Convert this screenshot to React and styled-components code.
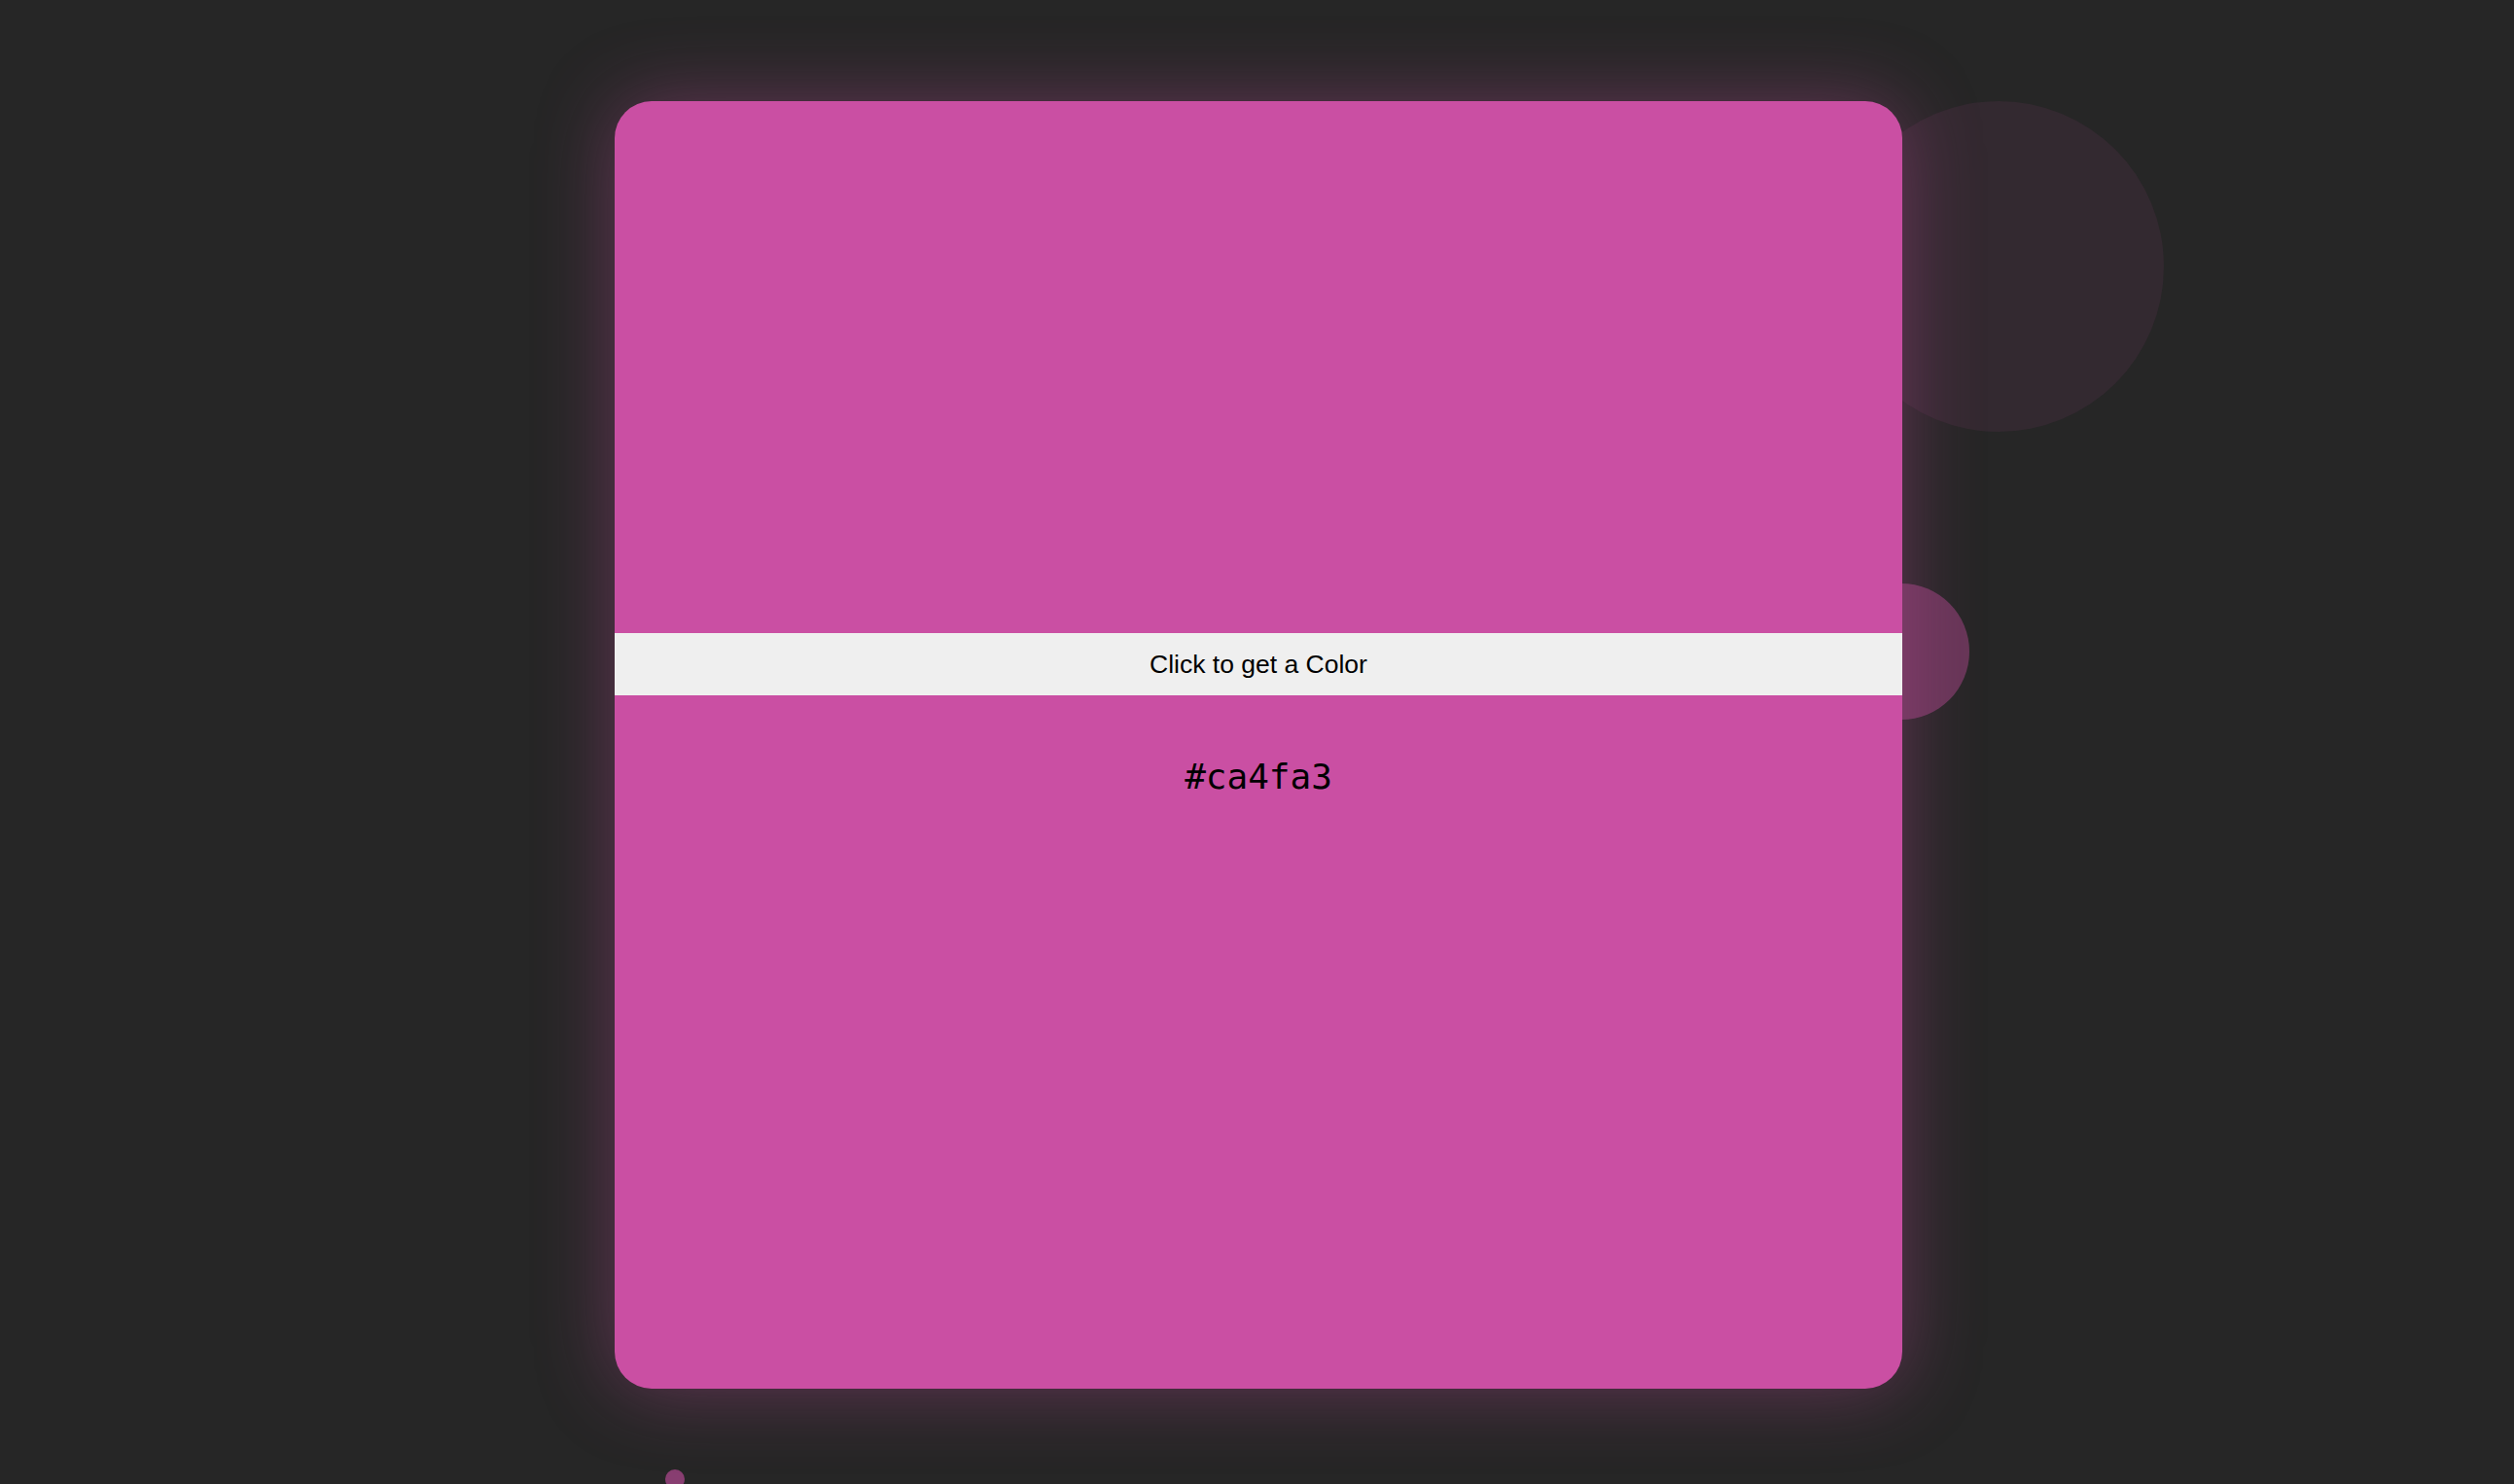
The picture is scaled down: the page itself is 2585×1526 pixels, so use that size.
import styled, { createGlobalStyle } from 'styled-components'

const GlobalStyle = createGlobalStyle`
  html, body {
    margin: 0;
    padding: 0;
    background: #262626;
    overflow: hidden;
  }
`

const Stage = styled.div`
  position: relative;
  width: 2585px;
  height: 1526px;
  background: #262626;
  overflow: hidden;
  display: flex;
  justify-content: center;
  padding: 104px 0 0 3px;
  box-sizing: border-box;
`

// 뒤에 떠다니는 동그라미들
const Bubble = styled.div`
  position: absolute;
  border-radius: 50%;
  background: ${(p) => p.$color};
  width: ${(p) => p.$size}px;
  height: ${(p) => p.$size}px;
  left: ${(p) => p.$x - p.$size / 2}px;
  top: ${(p) => p.$y - p.$size / 2}px;
  z-index: 0;
`

const Card = styled.div`
  position: relative;
  z-index: 1;
  width: 1324px;
  height: 1324px;
  border-radius: 38px;
  background: ${(p) => p.$color};
  box-shadow: 0 0 80px rgba(202, 79, 163, 0.38);
  display: flex;
  flex-direction: column;
  align-items: stretch;
  padding-top: 547px;
  box-sizing: border-box;
`

const ColorButton = styled.button`
  height: 64px;
  border: none;
  margin: 0;
  padding: 0;
  background: #efefef;
  color: #000;
  font-family: 'Liberation Sans', Arial, sans-serif;
  font-size: 26.5px;
  cursor: pointer;
`

const HexText = styled.p`
  margin: 62px 0 0;
  text-align: center;
  font-family: 'DejaVu Sans Mono', 'Liberation Mono', monospace;
  font-size: 36px;
  line-height: 1.2;
  color: #000;
`

function App() {
  const color = '#ca4fa3'
  return (
    <>
      <GlobalStyle />
      <Stage>
        <Bubble $x={2055} $y={274} $size={340} $color="rgba(202, 79, 163, 0.08)" />
        <Bubble $x={1955} $y={670} $size={140} $color="rgba(202, 79, 163, 0.4)" />
        <Bubble $x={694} $y={1521} $size={20} $color="rgba(202, 79, 163, 0.6)" />
        <Card $color={color}>
          <ColorButton>Click to get a Color</ColorButton>
          <HexText>{color}</HexText>
        </Card>
      </Stage>
    </>
  )
}

export default App
